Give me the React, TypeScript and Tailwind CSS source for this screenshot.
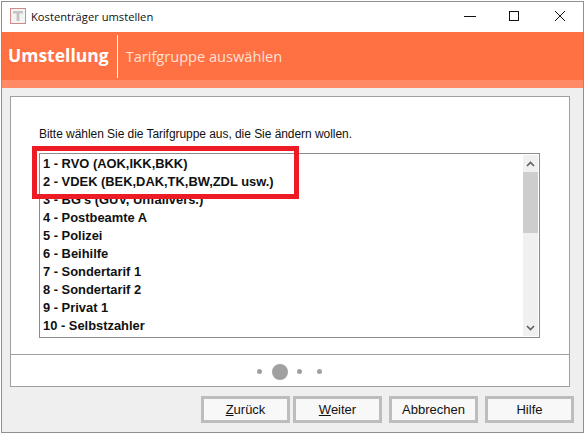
const tariffs = [
  '1 - RVO (AOK,IKK,BKK)',
  '2 - VDEK (BEK,DAK,TK,BW,ZDL usw.)',
  "3 - BG's (GUV, Unfallvers.)",
  '4 - Postbeamte A',
  '5 - Polizei',
  '6 - Beihilfe',
  '7 - Sondertarif 1',
  '8 - Sondertarif 2',
  '9 - Privat 1',
  '10 - Selbstzahler',
];

function WizardButton({ first, rest, className }: { first?: string; rest: string; className?: string }) {
  return (
    <button className={`h-[27px] w-[89px] border-[3px] border-[#bdbdbd] bg-[#f8f8f8] text-[13px] text-[#111] ${className ?? ''}`}>
      {first && <span className="underline">{first}</span>}
      {rest}
    </button>
  );
}

export default function App() {
  return (
    <div className="relative h-[433px] w-[584px] overflow-hidden bg-white font-['Liberation_Sans',sans-serif]">
      <div className="ml-[1px] mt-[1px] flex h-[432px] w-[583px] flex-col border-x border-y border-[#8f8f8f] bg-[#efefef]">
        {/* Title bar */}
        <div className="flex h-[30px] shrink-0 items-center bg-white pb-[2px]">
          <svg width="16" height="16" viewBox="0 0 16 16" className="ml-[8px]">
            <rect x="0.5" y="0.5" width="15" height="15" fill="#f4f4f4" stroke="#d08a8a" />
            <path d="M3 3h10v2.500H9.500V13h-3V5.500H3z" fill="#c4c4c4" />
          </svg>
          <span className="ml-[5px] mt-[2px] font-['Open_Sans',sans-serif] text-[11.2px] text-[#111]">Kostenträger umstellen</span>
          <div className="ml-auto flex items-center pr-[17px]">
            <svg width="14" height="12" viewBox="0 0 14 12" className="mr-[31px]">
              <path d="M1 6.500h12" stroke="#111" />
            </svg>
            <svg width="12" height="12" viewBox="0 0 12 12" className="mr-[34px]">
              <rect x="1.500" y="1.500" width="9" height="9" fill="none" stroke="#111" />
            </svg>
            <svg width="12" height="12" viewBox="0 0 12 12">
              <path d="M1 1l10 10M11 1L1 11" stroke="#111" fill="none" />
            </svg>
          </div>
        </div>

        {/* Orange header */}
        <div className="flex h-[48px] shrink-0 items-center bg-[#ff7043]">
          <span className="ml-[6px] font-['Open_Sans',sans-serif] text-[17.5px] font-bold leading-none text-white">Umstellung</span>
          <div className="ml-[8px] h-[43px] w-px bg-white" />
          <span className="ml-[8px] font-['Open_Sans',sans-serif] text-[14.600px] leading-none text-[#ffe0d6]">Tarifgruppe auswählen</span>
        </div>
        <div className="h-[8px] shrink-0 bg-[#ff8a65]" />

        {/* Content panel */}
        <div className="ml-[8px] mt-[8px] flex h-[291px] w-[560px] flex-col border border-[#a0a0a0] bg-white">
          <div className="flex h-[258px] shrink-0 flex-col border-b border-[#a0a0a0] px-[28px]">
            <p className="mt-[29px] text-xs leading-[16px] tracking-[-0.05px] text-[#111]">Bitte wählen Sie die Tarifgruppe aus, die Sie ändern wollen.</p>
            <div className="mt-[11px] flex h-[185px] w-[501px] border border-[#8c8c8c] p-[1px]">
              <ul className="flex-1 pl-[2px] text-[12.9px] font-bold leading-[18px] text-[#111]">
                {tariffs.map((t) => (
                  <li key={t} className="h-[18px] whitespace-pre">{t}</li>
                ))}
              </ul>
              <div className="flex w-[15px] flex-col bg-[#f0f0f0]">
                <div className="flex h-[17px] items-center justify-center">
                  <svg width="9" height="6" viewBox="0 0 9 6">
                    <path d="M1 5l3.500-3.500L8 5" fill="none" stroke="#606060" strokeWidth="1.600" />
                  </svg>
                </div>
                <div className="h-[61px] bg-[#cdcdcd]" />
                <div className="mt-auto flex h-[17px] items-center justify-center">
                  <svg width="9" height="6" viewBox="0 0 9 6">
                    <path d="M1 1l3.500 3.500L8 1" fill="none" stroke="#606060" strokeWidth="1.600" />
                  </svg>
                </div>
              </div>
            </div>
          </div>
          {/* Step dots */}
          <div className="flex flex-1 items-center pl-[246px] pt-[2px]">
            <div className="size-[5px] rounded-full bg-[#a0a0a0]" />
            <div className="ml-[10px] size-[16px] rounded-full bg-[#a0a0a0]" />
            <div className="ml-[9px] size-[5px] rounded-full bg-[#a0a0a0]" />
            <div className="ml-[15px] size-[5px] rounded-full bg-[#a0a0a0]" />
          </div>
        </div>

        {/* Footer buttons */}
        <div className="mt-[9px] flex pl-[199px]">
          <WizardButton first="Z" rest="urück" />
          <WizardButton first="W" rest="eiter" className="ml-[3px]" />
          <WizardButton rest="Abbrechen" className="ml-[7px]" />
          <WizardButton rest="Hilfe" className="ml-[7px]" />
        </div>
      </div>

      {/* Red annotation box */}
      <div className="absolute left-[32px] top-[146px] h-[53px] w-[267px] border-[5px] border-[#ed1c24]" />
    </div>
  );
}
